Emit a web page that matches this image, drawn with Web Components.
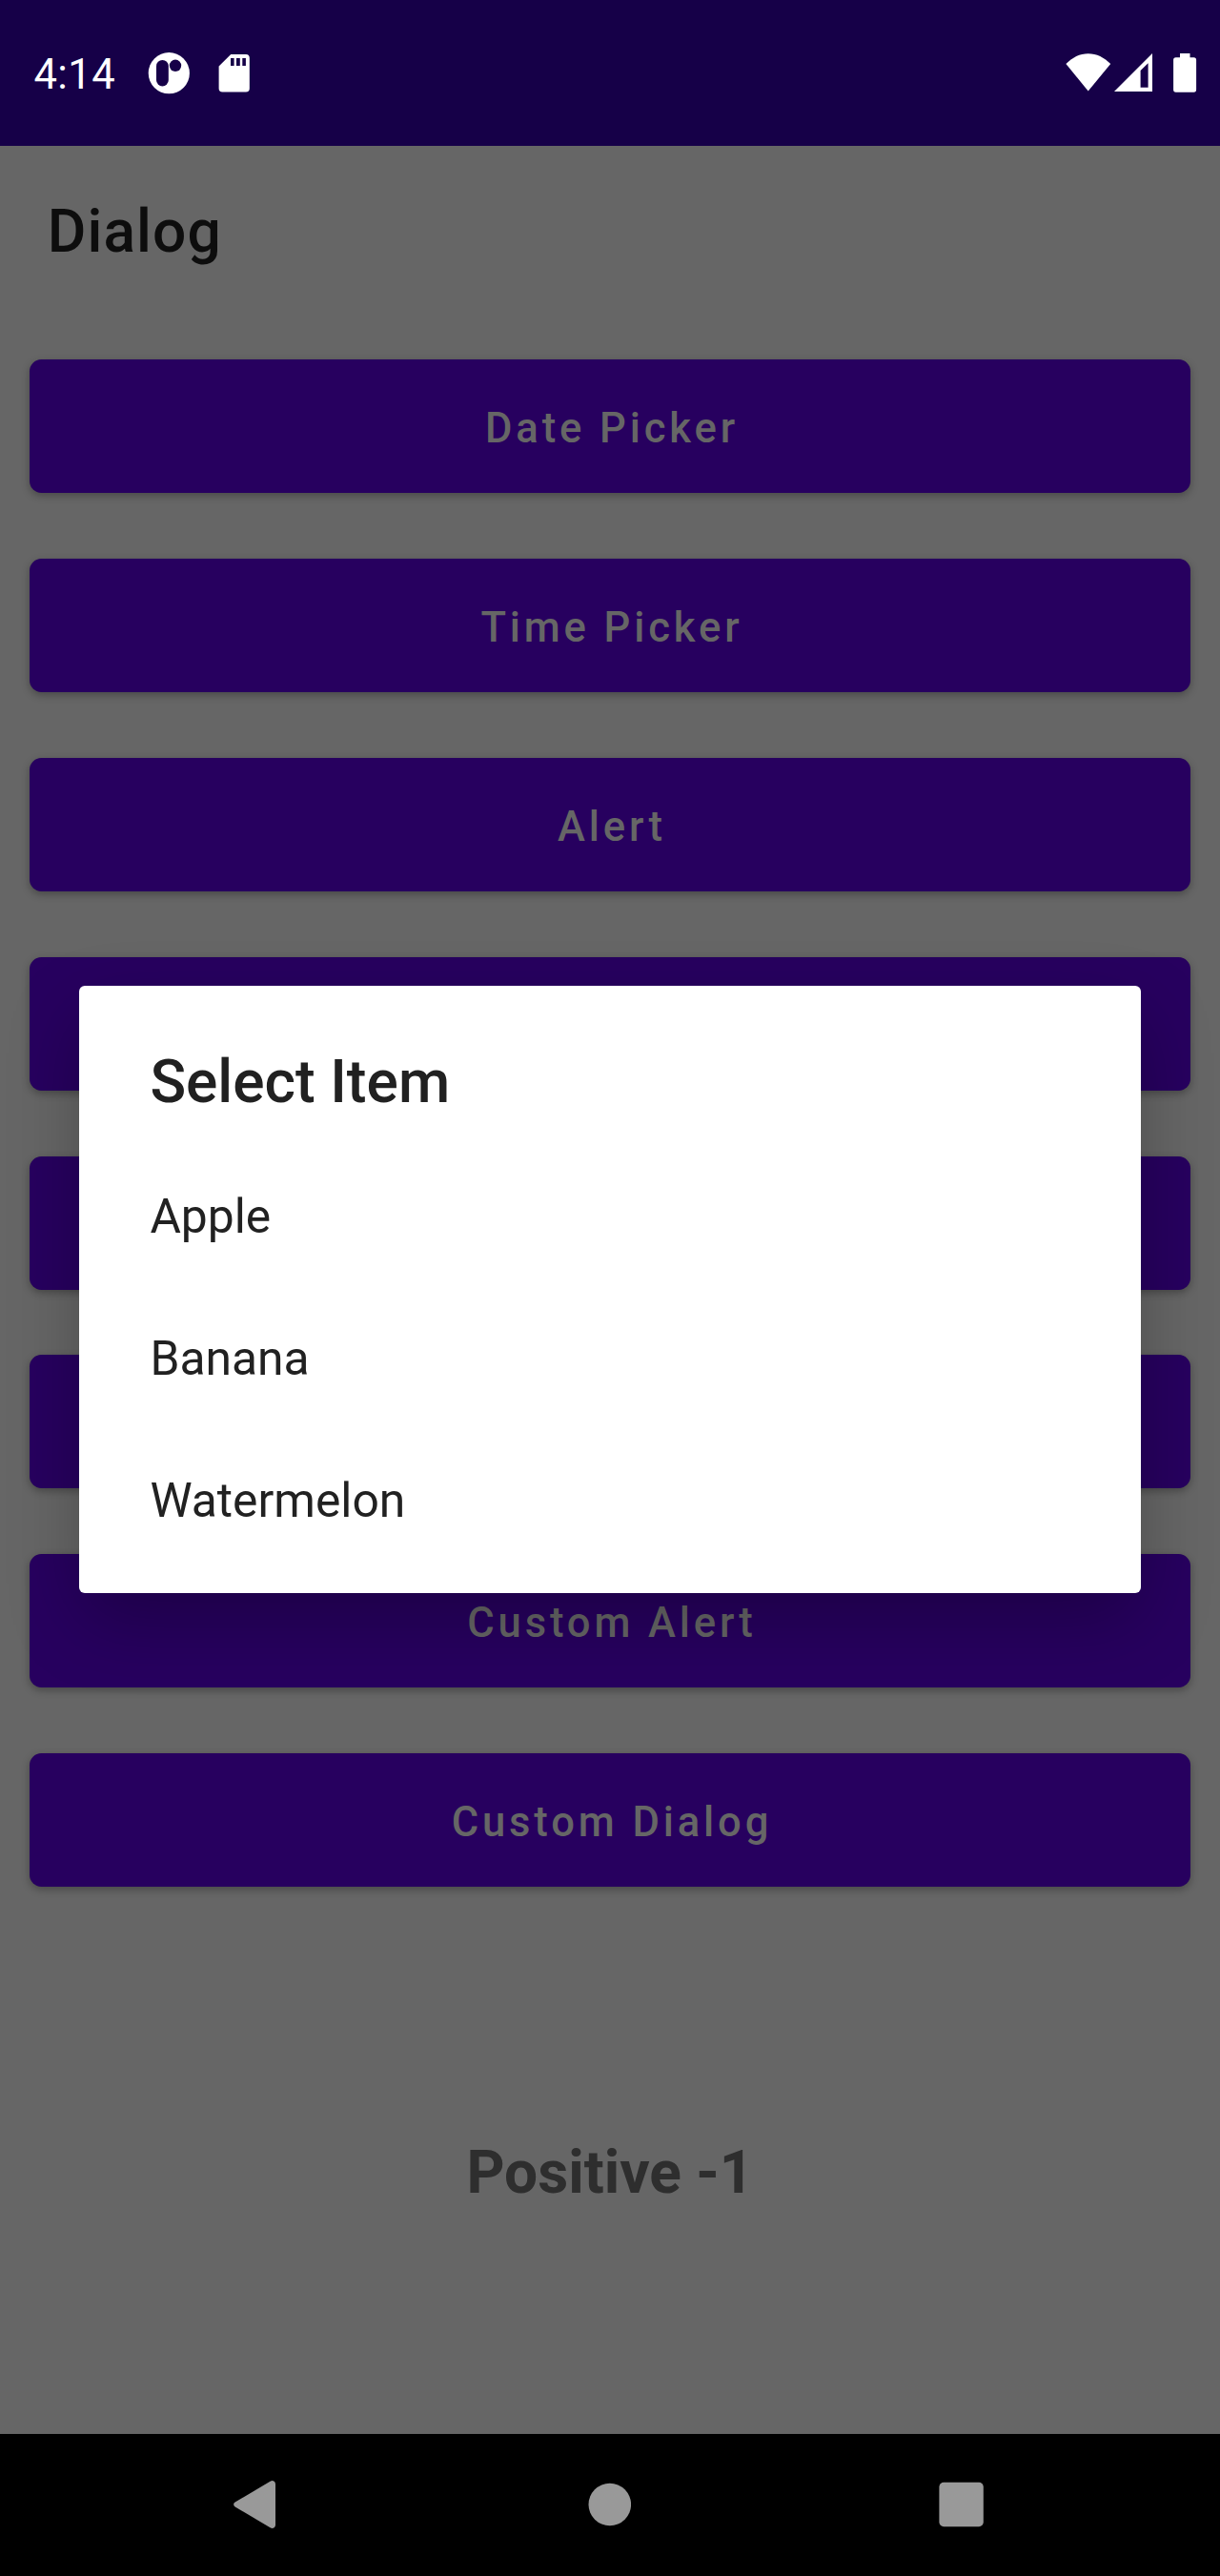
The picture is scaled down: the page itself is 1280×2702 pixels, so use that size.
<!DOCTYPE html>
<html lang="en">
<head>
<meta charset="utf-8">
<title>Dialog</title>
<style>
  html, body { margin: 0; padding: 0; }
  body { background: #666; font-family: Roboto, "Liberation Sans", sans-serif; }
</style>
</head>
<body>
<phone-screen>
  <status-bar slot="status">4:14</status-bar>
  <app-bar>Dialog</app-bar>
  <button-list>
    <md-button>Date Picker</md-button>
    <md-button>Time Picker</md-button>
    <md-button>Alert</md-button>
    <md-button></md-button>
    <md-button></md-button>
    <md-button></md-button>
    <md-button>Custom Alert</md-button>
    <md-button>Custom Dialog</md-button>
  </button-list>
  <result-text>Positive -1</result-text>
  <select-dialog slot="dialog">
    <span slot="title">Select Item</span>
    <dialog-item>Apple</dialog-item>
    <dialog-item>Banana</dialog-item>
    <dialog-item>Watermelon</dialog-item>
  </select-dialog>
  <nav-bar slot="nav"></nav-bar>
</phone-screen>
<script>
  const define = (name, html) => customElements.define(name, class extends HTMLElement {
    constructor() {
      super();
      this.attachShadow({ mode: 'open' }).innerHTML = html;
    }
  });

  define('phone-screen', `
    <style>
      :host { display: flex; flex-direction: column; position: relative; width: 1280px; height: 2702px; overflow: hidden; background: #666; }
      main { flex: 1; display: flex; flex-direction: column; min-height: 0; }
    </style>
    <slot name="status"></slot>
    <main><slot></slot></main>
    <slot name="nav"></slot>
    <slot name="dialog"></slot>`);

  define('status-bar', `
    <style>
      :host { display: flex; box-sizing: border-box; height: 153px; padding: 46px 24px 0 35.5px; background: #160048; color: #fff; }
      .clock { width: 119.5px; font-size: 43.56px; line-height: 65px; letter-spacing: .4px; white-space: nowrap; }
      .icons { display: flex; }
      .left { gap: 30px; }
      .right { margin-left: auto; }
      svg { display: block; fill: #fff; }
    </style>
    <span class="clock"><slot></slot></span>
    <div class="icons left">
      <svg width="44" height="60" viewBox="155 46 44 60">
        <circle cx="177.3" cy="76.7" r="21.6"/>
        <g fill="#160048"><rect x="164" y="63" width="12.8" height="27.4" rx="6.4"/><circle cx="184" cy="68.8" r="6.2"/></g>
      </svg>
      <svg width="34" height="60" viewBox="229 46 34 60">
        <path fill-rule="evenodd" d="M242.2 57H258a3.8 3.8 0 0 1 3.8 3.8V92.8a3.8 3.8 0 0 1-3.8 3.8H233.4a3.8 3.8 0 0 1-3.8-3.8V69.6ZM242 61v8h3.6v-8ZM248 61v8h3.8v-8ZM254.3 61v8h3.6v-8Z"/>
      </svg>
    </div>
    <div class="icons right">
      <svg width="138" height="60" viewBox="1118 46 138 60">
        <path d="M1141.7 95.4 1118.4 67C1125 60.2 1133 56.2 1141.7 56.2S1158.600 60.2 1165.2 67Z"/>
        <path fill-rule="evenodd" d="M1169 96 1209 56V96ZM1196.6 74V91.7H1204.6V66.2Z"/>
        <path d="M1238 56h10.5v4.200h4a2.6 2.6 0 0 1 2.6 2.6v31.300a2.6 2.6 0 0 1-2.6 2.6h-18.800a2.6 2.6 0 0 1-2.6-2.6V62.800a2.6 2.6 0 0 1 2.6-2.6h4.300Z"/>
      </svg>
    </div>`);

  define('app-bar', `
    <style>
      :host { display: block; height: 179px; padding-left: 49.8px; line-height: 179px; font-size: 62.22px; font-weight: 500; letter-spacing: 1.1px; color: #0d0d0d; }
    </style>
    <slot></slot>`);

  define('button-list', `
    <style>
      :host { display: flex; flex-direction: column; gap: 68.9px; padding: 45px 31px 0; }
    </style>
    <slot></slot>`);

  define('md-button', `
    <style>
      :host { display: flex; justify-content: center; box-sizing: border-box; height: 140px; padding: 6.15px 0 0 3.9px; border-radius: 12.4px; background: #27005f; color: #666;
        font-size: 43.56px; font-weight: 500; line-height: 133px; letter-spacing: 3.89px; box-shadow: 0 3px 9px rgba(0,0,0,.3); }
    </style>
    <slot></slot>`);

  define('result-text', `
    <style>
      :host { display: block; margin-top: 252px; text-align: center; font-size: 62.22px; line-height: 95px; font-weight: 700; color: #2e2e2e; }
    </style>
    <slot></slot>`);

  /* The dialog floats over the dimmed screen. */
  define('select-dialog', `
    <style>
      :host { position: absolute; top: 1034.4px; left: 82.7px; width: 1114.7px; height: 636.3px; box-sizing: border-box; border-radius: 6px; background: #fff; color: #212121;
        display: flex; flex-direction: column; box-shadow: 0 30px 78px -4px rgba(0,0,0,.27); }
      h2 { margin: 0; padding: 35px 74.7px 0; height: 131.3px; line-height: 131px; font-size: 62.22px; font-weight: 500; }
    </style>
    <h2><slot name="title"></slot></h2>
    <slot></slot>`);

  define('dialog-item', `
    <style>
      :host { display: block; height: 149.33px; line-height: 150px; padding: 0 74.7px; font-size: 49.78px; }
    </style>
    <slot></slot>`);

  define('nav-bar', `
    <style>
      :host { display: flex; align-items: center; flex: none; height: 149.3px; padding-left: 245px; box-sizing: border-box; background: #000; }
      svg { display: block; fill: #999; }
      .home { margin: 0 323px 0 328px; }
    </style>
    <svg width="44" height="52" viewBox="0 0 44 52"><path d="M38.5 1.7Q40.6.6 42.3 1.5 44 2.4 44 4.5V47.5Q44 49.6 42.3 50.5 40.6 51.4 38.5 50.3L1.7 28.4Q.1 27.4.1 26T1.7 23.6Z"/></svg>
    <svg class="home" width="45.4" height="46" viewBox="0 0 45.4 46"><circle cx="22.8" cy="23" r="22.3"/></svg>
    <svg width="48" height="48" viewBox="0 0 48 48"><rect x=".4" y=".8" width="46.4" height="46.4" rx="4.7"/></svg>`);
</script>
</body>
</html>
